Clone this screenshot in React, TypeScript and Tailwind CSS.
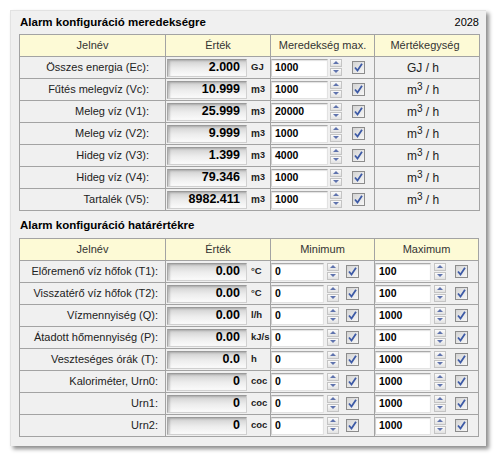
import React from "react";

const font = "font-['Liberation_Sans',Arial,sans-serif]";

const slopeRows = [
  { label: "Összes energia (Ec):", value: "2.000", unit: "GJ", max: "1000", per: "GJ" },
  { label: "Fűtés melegvíz (Vc):", value: "10.999", unit: "m3", max: "1000", per: "m3" },
  { label: "Meleg víz (V1):", value: "25.999", unit: "m3", max: "20000", per: "m3" },
  { label: "Meleg víz (V2):", value: "9.999", unit: "m3", max: "1000", per: "m3" },
  { label: "Hideg víz (V3):", value: "1.399", unit: "m3", max: "4000", per: "m3" },
  { label: "Hideg víz (V4):", value: "79.346", unit: "m3", max: "1000", per: "m3" },
  { label: "Tartalék (V5):", value: "8982.411", unit: "m3", max: "1000", per: "m3" },
];

const limitRows = [
  { label: "Előremenő víz hőfok (T1):", value: "0.00", unit: "°C", min: "0", max: "100" },
  { label: "Visszatérő víz hőfok (T2):", value: "0.00", unit: "°C", min: "0", max: "100" },
  { label: "Vízmennyiség (Q):", value: "0.00", unit: "l/h", min: "0", max: "1000" },
  { label: "Átadott hőmennyiség (P):", value: "0.00", unit: "kJ/s", min: "0", max: "100" },
  { label: "Veszteséges órák (T):", value: "0.0", unit: "h", min: "0", max: "1000" },
  { label: "Kaloriméter, Urn0:", value: "0", unit: "coc", min: "0", max: "1000" },
  { label: "Urn1:", value: "0", unit: "coc", min: "0", max: "1000" },
  { label: "Urn2:", value: "0", unit: "coc", min: "0", max: "1000" },
];

function Unit({ u }: { u: string }) {
  if (u === "m3") {
    return (
      <span className="ml-[4px] text-[10px] font-bold text-[#222]">
        m<span className="relative -top-[1px] text-[9px]">3</span>
      </span>
    );
  }
  return <span className="ml-[4px] text-[9.5px] font-bold text-[#222] whitespace-nowrap">{u}</span>;
}

function ValueBox({ v }: { v: string }) {
  return (
    <div className="ml-[1px] flex h-[18px] w-[80px] shrink-0 items-center justify-end border border-[#d0d0d0] border-t-[#9a9a9a] border-l-[#a8a8a8] bg-gradient-to-b from-[#cfcfcf] via-[#ececec] to-[#fbfbfb] pr-[6px] text-[12.5px] font-bold text-black shadow-[inset_2px_1px_2px_rgba(0,0,0,0.18)]">
      {v}
    </div>
  );
}

function Spin() {
  return (
    <div className="flex h-[18px] w-[12px] shrink-0 flex-col gap-[1px]">
      <div className="flex h-[8px] items-center justify-center border border-[#c4c4c4] bg-gradient-to-b from-[#fbfbfb] to-[#e2e2e2]">
        <svg width="6" height="3" viewBox="0 0 6 3"><path d="M0 3 L3 0 L6 3 Z" fill="#5f73ad" /></svg>
      </div>
      <div className="flex h-[8px] items-center justify-center border border-[#c4c4c4] bg-gradient-to-b from-[#fbfbfb] to-[#e2e2e2]">
        <svg width="6" height="3" viewBox="0 0 6 3"><path d="M0 0 L6 0 L3 3 Z" fill="#5f73ad" /></svg>
      </div>
    </div>
  );
}

function Check() {
  return (
    <div className="flex h-[13px] w-[13px] shrink-0 items-center justify-center border border-[#8c8c8c] bg-gradient-to-br from-[#d4d4d4] to-[#f7f7f7]">
      <svg width="9" height="9" viewBox="0 0 9 9">
        <path d="M1 4.5 L3.5 7.5 L8 0.8" stroke="#3d5aa6" strokeWidth="1.8" fill="none" />
      </svg>
    </div>
  );
}

function Input({ v, w }: { v: string; w: string }) {
  return (
    <div
      className={`flex h-[18px] ${w} shrink-0 items-center border border-[#e2e2e2] border-t-[#a9a9a9] border-l-[#cfcfcf] bg-white pl-[3px] text-[10.5px] font-bold text-black shadow-[inset_0_1px_1px_rgba(0,0,0,0.12)]`}
    >
      {v}
    </div>
  );
}

function HeadCell({ w, children }: { w: string; children: React.ReactNode }) {
  return (
    <div className={`${w} flex items-center justify-center border-r border-[#a3a3a3] text-[11px] text-[#333]`}>
      {children}
    </div>
  );
}

export default function App() {
  return (
    <div className={`min-h-screen bg-white ${font}`}>
      <div className="pl-[10px] pt-[10px]">
        <div className="w-[476px] border-t border-l border-[#e2e2e2] bg-[#f0f0f0] pb-[9px] pl-[8px] pr-[6px] shadow-[3px_3px_4px_rgba(0,0,0,0.45)]">
          {/* Slope table */}
          <div className="flex h-[23px] items-center justify-between">
            <span className="pl-[1px] text-[11.5px] font-bold text-black">Alarm konfiguráció meredekségre</span>
            <span className="pr-[1px] text-[11px] text-black">2028</span>
          </div>
          <div className="w-[461px] border-t border-l border-[#a3a3a3]">
            <div className="flex h-[22px] border-b border-[#a3a3a3] bg-[#fdfad6]">
              <HeadCell w="w-[146px]">Jelnév</HeadCell>
              <HeadCell w="w-[105px]">Érték</HeadCell>
              <HeadCell w="w-[104px]">Meredekség max.</HeadCell>
              <HeadCell w="w-[105px]"><span className="pr-[4px]">Mértékegység</span></HeadCell>
            </div>
            {slopeRows.map((r) => (
              <div key={r.label} className="flex h-[22px] border-b border-[#a3a3a3]">
                <div className="flex w-[146px] items-center justify-end border-r border-[#a3a3a3] pr-[16px] text-[11px] text-[#222]">
                  {r.label}
                </div>
                <div className="flex w-[105px] items-center border-r border-[#a3a3a3]">
                  <ValueBox v={r.value} />
                  <Unit u={r.unit} />
                </div>
                <div className="flex w-[104px] items-center border-r border-[#a3a3a3]">
                  <Input v={r.max} w="w-[57px]" />
                  <div className="ml-[2px]"><Spin /></div>
                  <div className="ml-[10px]"><Check /></div>
                </div>
                <div className="flex w-[105px] items-center justify-center border-r border-[#a3a3a3] pr-[8px] text-[12px] text-[#222]">
                  {r.per === "m3" ? (
                    <span>
                      m<span className="relative -top-[4px] text-[10px]">3</span>&nbsp;/ h
                    </span>
                  ) : (
                    <span>GJ&nbsp;/ h</span>
                  )}
                </div>
              </div>
            ))}
          </div>

          {/* Limit table */}
          <div className="flex h-[27px] items-center pt-[3px]">
            <span className="pl-[1px] text-[11.5px] font-bold text-black">Alarm konfiguráció határértékre</span>
          </div>
          <div className="w-[460px] border-t border-l border-[#a3a3a3]">
            <div className="flex h-[22px] border-b border-[#a3a3a3] bg-[#fdfad6]">
              <HeadCell w="w-[146px]">Jelnév</HeadCell>
              <HeadCell w="w-[105px]">Érték</HeadCell>
              <HeadCell w="w-[104px]">Minimum</HeadCell>
              <HeadCell w="w-[104px]">Maximum</HeadCell>
            </div>
            {limitRows.map((r) => (
              <div key={r.label} className="flex h-[22px] border-b border-[#a3a3a3]">
                <div className="flex w-[146px] items-center justify-end border-r border-[#a3a3a3] pr-[7px] text-[11px] text-[#222] whitespace-nowrap">
                  {r.label}
                </div>
                <div className="flex w-[105px] items-center border-r border-[#a3a3a3]">
                  <ValueBox v={r.value} />
                  <Unit u={r.unit} />
                </div>
                <div className="flex w-[104px] items-center border-r border-[#a3a3a3]">
                  <Input v={r.min} w="w-[53px]" />
                  <div className="ml-[3px]"><Spin /></div>
                  <div className="ml-[7px]"><Check /></div>
                </div>
                <div className="flex w-[104px] items-center border-r border-[#a3a3a3]">
                  <Input v={r.max} w="w-[56px]" />
                  <div className="ml-[3px]"><Spin /></div>
                  <div className="ml-[9px]"><Check /></div>
                </div>
              </div>
            ))}
          </div>
        </div>
      </div>
    </div>
  );
}
